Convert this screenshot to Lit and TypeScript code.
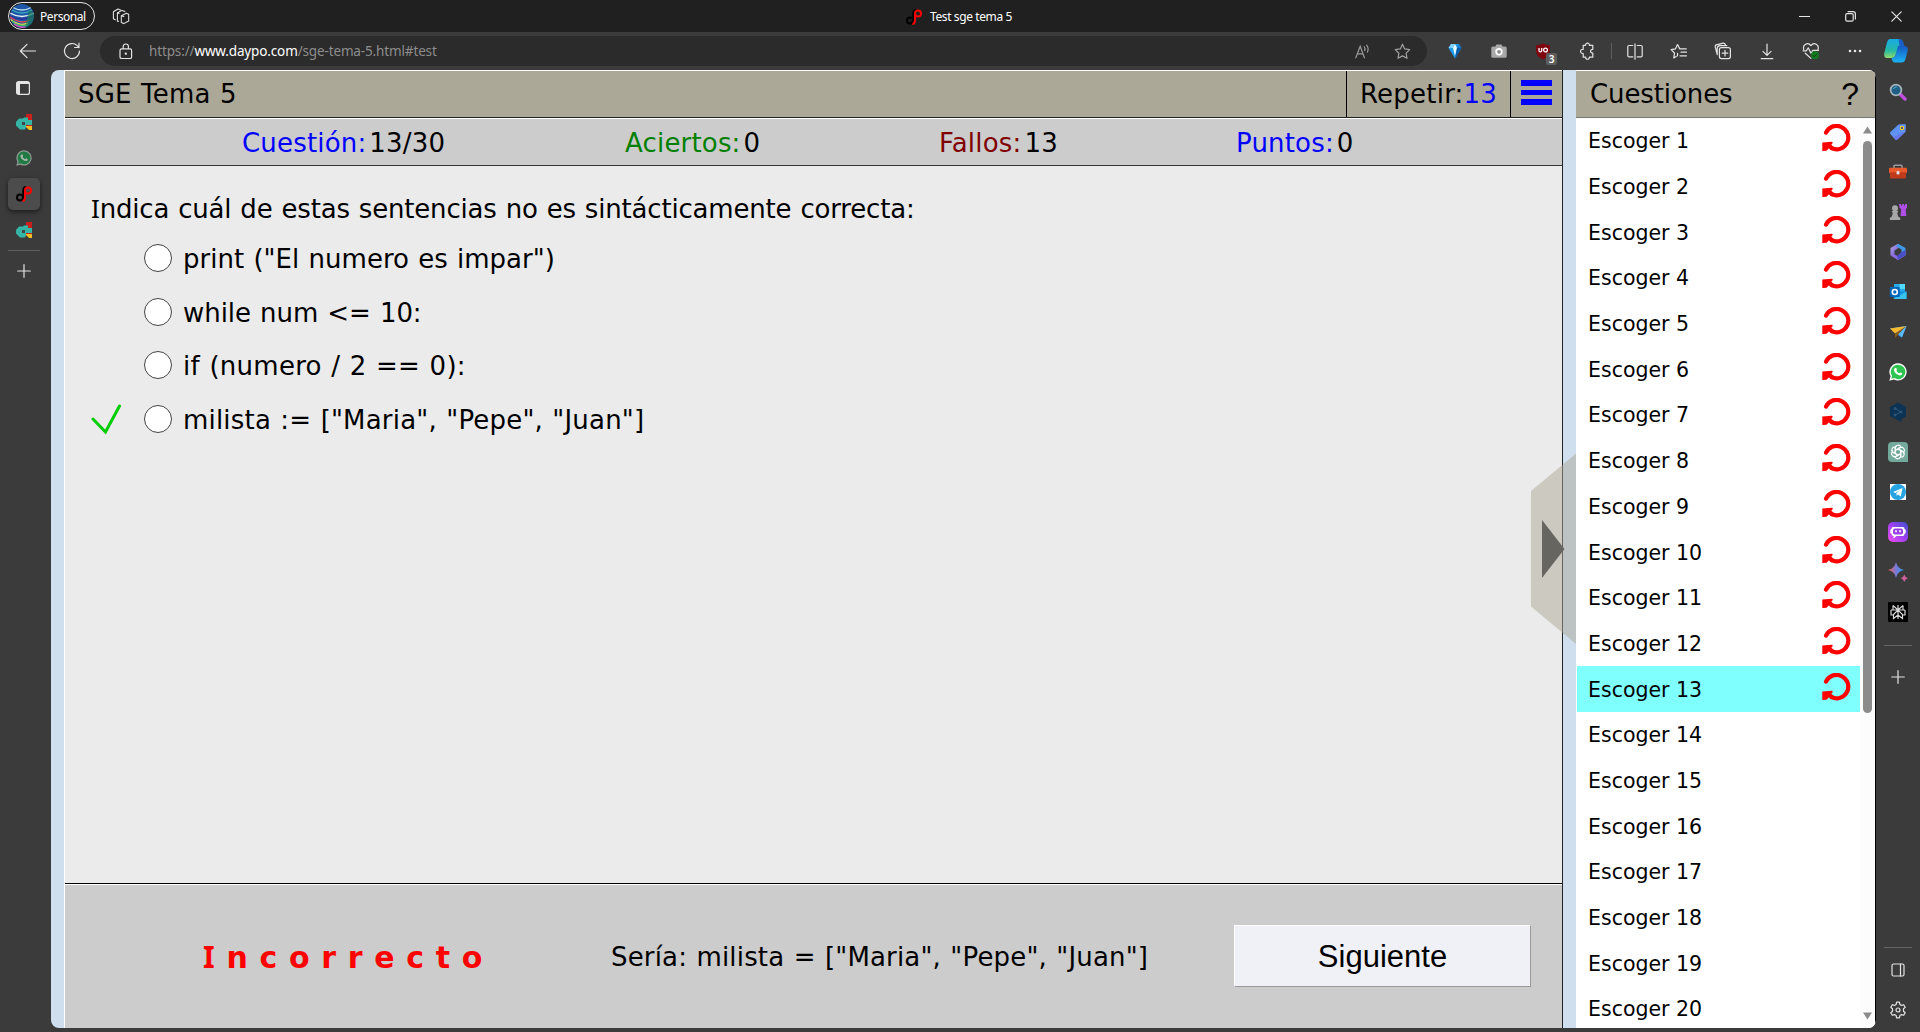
import { LitElement, html, css, svg, nothing } from "lit";
import { customElement } from "lit/decorators.js";

const line = (w: number, h: number, body: unknown, vb = `0 0 ${w} ${h}`) =>
  html`<svg width=${w} height=${h} viewBox=${vb} fill="none" stroke="#e4e4e4" stroke-width="1.2"
    stroke-linecap="round" stroke-linejoin="round">${body}</svg>`;
const art = (w: number, h: number, body: unknown) =>
  html`<svg width=${w} height=${h} viewBox=${`0 0 ${w} ${h}`}>${body}</svg>`;

const plus = line(14, 14, svg`<path d="M7 .7v12.6M.7 7h12.6"/>`);

const daypo = art(16, 16, svg`<g fill="none" stroke-width="2">
  <circle cx="4" cy="11.600" r="3" stroke="#000"/><path d="M7.300 12V4.500Q7.400 1 10 1" stroke="#000"/>
  <circle cx="12" cy="4.400" r="3" stroke="#f00"/><path d="M9 4.400V10.500Q9 15 6.400 15" stroke="#f00"/></g>`);

const campus = art(16, 16, svg`<path d="M10 0h6v6h-6z" fill="#c9201c"/>
  <path d="M3 4.500h4l1-1h4v3l-2 2v5l-1 2H4l-2-2-2-2V8z" fill="#35b5a8"/><path d="M10 6h6v5h-6z" fill="#35b5a8"/>
  <path d="M6 8h3v3H6z" fill="#444"/><path d="M10 11h6v5h-3l-3-3z" fill="#f4bd20"/><path d="M10 11h6v1h-6z" fill="#c9201c"/>`);

const whatsapp = (s: number, rim: string, green: string, phone: string) =>
  html`<svg width=${s} height=${s} viewBox="0 0 18 18">
    <path d="M9.200.3a8.600 8.600 0 1 1-4.200 16.200L.3 17.700l1.300-4.500A8.600 8.600 0 0 1 9.200.3z" fill=${rim}/>
    <path d="M9.200 1.700a7.200 7.200 0 1 1-3.900 13.300l-3 .8.8-2.900A7.200 7.200 0 0 1 9.200 1.700z" fill=${green}/>
    <path d="M6.400 5c.5-.3.900-.1 1.100.4l.5 1.200c.1.400-.6 1-.6 1.200.6 1.200 1.600 2 2.800 2.500.4 0 .8-1 1.200-.9l1.500.7c.5.300.2 1.300-.2 1.700-1.100 1.100-3 .6-4.600-.5C6.500 10.200 5 8.600 5 6.900c0-.8.600-1.600 1.400-1.900z" fill=${phone}/></svg>`;

const reload = html`<svg class="reload" width="29" height="29" viewBox="0 0 29 29">
  <path d="M4 8.600A11.700 11.700 0 1 1 9.600 24.200" fill="none" stroke="#f00" stroke-width="4.200" stroke-linecap="round"/>
  <path d="M.3 18.400L9.900 17.800Q11.300 18 10.400 19.400L9.300 20.700L12 23L10 26.400L7 24.300L4.500 26.800L.3 27z" fill="#f00"/></svg>`;

const workspaces = line(18, 18, svg`<path stroke-width="1.050" d="M9.300 8.700l5-2.400 2.400.9v6.800l-4.900 2.600-2.500-1V8.700l2.500.900M6.600 14.200h-1.200V5.800L10 3.400l2.900 1.100M3.300 12.700L1.400 11.800V4.800L6 2l2.500.9M5.400 5.800l1.800.6"/>`);

const uiLock = line(14, 17, svg`<rect x="1" y="5.800" width="11.600" height="9.700" rx="1.600"/><path d="M4.200 5.500V3.600a2.600 2.600 0 0 1 5.200 0v1.900"/><circle cx="6.800" cy="10.600" r=".6" fill="#e4e4e4"/>`);

const readAloud = html`<svg width="15" height="15" viewBox="0 0 15 15" fill="none" stroke="#9a9a9a" stroke-width="1.200" stroke-linecap="round"><path d="M.8 13.800L5.200 2.200l4.200 11.600M2.400 9.800h5.500M9.200 2.800q1.300 1.600.5 3.800M11.600 1.200q2.600 3.300.8 6.900"/></svg>`;
const star = html`<svg width="17" height="17" viewBox="0 0 17 17" fill="none" stroke="#a0a0a0" stroke-width="1.200" stroke-linejoin="round"><path d="M8.500 1.200l2.200 4.700 5 .7-3.600 3.600.9 5.100-4.500-2.400L4 15.300l.9-5.100L1.200 6.600l5.100-.7z"/></svg>`;

const gem = art(14, 16, svg`<path d="M3 1h8l2.500 4L7 15.500.500 5z" fill="#1e9df0"/><path d="M3 1h4L5 5H.5z" fill="#7fd1ff"/><path d="M7 1L5 5l2 8 2-8z" fill="#e9f9ff"/><path d="M11 1L9 5h4.500z" fill="#1577c4"/><path d="M9 5h4.500L7 15.500z" fill="#0a5aa6"/>`);
const camera = art(16, 14, svg`<path d="M2 2.500h2.500L5.500.600h5L11.500 2.500H14q1.700 0 1.700 1.500v8.500q0 1.200-1.500 1.200H1.800Q.3 13.700.3 12.500V4Q.3 2.500 2 2.500z" fill="#a9a9a9"/><circle cx="8" cy="7.800" r="3.700" fill="#fff"/><circle cx="8" cy="7.800" r="1.900" fill="#8b8b8b"/>`);
const shield = art(16, 17, svg`<path d="M8 .5q3 1.700 7 1.700v5.500Q15 13 8 16.500 1 13 1 7.700V2.200q4 0 7-1.700z" fill="#800610"/><path d="M4 5v2.500q0 1.300 1.300 1.300T6.700 7.500V5" fill="none" stroke="#fff" stroke-width="1.300"/><circle cx="10.500" cy="7" r="1.900" fill="none" stroke="#fff" stroke-width="1.300"/>`);
const puzzle = line(16, 18, svg`<path d="M4.200 3.300h2.400c-.2-3 4-3 3.800 0h3.400v4c-3-.2-3 3.900 0 3.700v4.200h-3.400c.2 2.700-4 2.700-3.800 0H4.200v-3.700c-3.600.2-3.600-4.400 0-4.200z"/>`);
const split = line(16, 17, svg`<path d="M5.800 2.500H2q-1.200 0-1.200 1.200v9q0 1.200 1.200 1.200h3.800M10.200 2.500H14q1.200 0 1.200 1.200v9q0 1.200-1.200 1.200h-3.800M8 .8v15.400"/>`);
const favs = line(18, 17, svg`<path d="M6.200 13.500l-2.400 1.400.7-4.900L1.100 6.600l4.300-.7L7.500 1.500l2.300 4.400h6.400M11 9.200h5.500M10 12.800h6.500M7.600 10.400l-.2 2.400"/>`);
const collect = line(18, 18, svg`<rect x="5.400" y="5.600" width="11" height="11" rx="2"/><path d="M11 8.300v5.600M8.200 11.100h5.600M3 11.800L1.200 4.600Q1 3.300 2.200 2.900l7-1.800q1.400-.2 1.900 1.100l.3.900M3.200 12.600V6.600Q3.200 3.900 6 3.600h6.800"/>`);
const download = line(14, 17, svg`<path d="M7 1v11M3 8.300l4 4 4-4M1.200 15.700h11.600"/>`);
const health = line(18, 18, svg`<path d="M1.800 7.500C.2 2.500 6-.3 8.900 3.600c2.900-3.900 8.700-1.100 7.100 3.900M1 8.800h3.400l1.800-3 2.800 5.500 1.800-3h5.700M3.300 11.200l5.600 5.200"/><circle cx="13" cy="13.300" r="4" fill="#137a20" stroke="none"/><path d="M11.300 13.400l1.200 1.200 2.300-2.500" stroke="#0a3d10" stroke-width="1"/>`);
const dots = art(16, 4, svg`<g fill="#e8e8e8"><circle cx="3" cy="2" r="1.300"/><circle cx="8" cy="2" r="1.300"/><circle cx="13" cy="2" r="1.300"/></g>`);
const copilot = art(26, 24, svg`<defs>
  <linearGradient id="ca" x1="0" y1="0" x2="0" y2="1"><stop stop-color="#19a9e6"/><stop offset=".6" stop-color="#25b9a5"/><stop offset="1" stop-color="#8fdc6a"/></linearGradient>
  <linearGradient id="cb" x1="0" y1="0" x2="0" y2="1"><stop stop-color="#1658c4"/><stop offset="1" stop-color="#1bb4f2"/></linearGradient></defs>
  <path d="M7 0h9q3 0 4 4l1 3h-5L12.500 16q-1 3-4 3H4q-3.500 0-2.700-5L4 3.500Q4.900 0 7 0z" fill="url(#ca)"/>
  <path d="M15 7h6.500q4 0 3.200 4.500L22.500 20q-.9 3.500-4 3.500H12q-2.500 0-3.500-4.500 3 0 4-3z" fill="url(#cb)"/>
  <path d="M15.500 0q4 0 5 4l1 3h-5z" fill="#1b5fc8"/>`);

const search = art(18, 18, svg`<path d="M11 11l5 5" stroke="#c04fe0" stroke-width="3.400" stroke-linecap="round"/><circle cx="7" cy="7" r="5.400" fill="#1f5f86" stroke="#a8b4ba" stroke-width="1.700"/><path d="M4.400 6q1-2.300 3.400-2" stroke="#5fb2d8" fill="none"/>`);
const tag = art(18, 18, svg`<path d="M9.500 1.500L15.500 1q1.600 0 1.500 1.500l-.5 6.200L8.300 16.500q-1 .9-2 0L1.300 11q-.8-1 .1-2z" fill="#5f92f2"/><path d="M16.500 8.700L8.300 16.500q-1 .9-2 0L4 14z" fill="#6a78ee"/><circle cx="13" cy="5" r="1.700" fill="#2b4a8c" stroke="#f3c927" stroke-width="1.200"/>`);
const toolbox = art(18, 16, svg`<path d="M5 4V2q0-.8.8-.8h6.400q.8 0 .8.800v2" fill="none" stroke="#9a9a9a" stroke-width="1.500"/><rect y="3.700" width="18" height="5.500" rx="1.200" fill="#ea5a2d"/><rect x="1" y="8.200" width="16" height="6.300" rx="1" fill="#bf3b1b"/><rect x="7.500" y="7" width="3" height="3.600" rx="1" fill="#ddd"/>`);
const chess = art(18, 18, svg`<g fill="#a7a7a7"><circle cx="6" cy="5.300" r="3"/><path d="M3 8h6v1.500H8l1.200 4 2 1.500v2H.800v-2l2-1.500 1.200-4H3z"/></g><path d="M10 1h2v1.500h1.200V1h1.800v1.500h1V1H18v4l-1.300 1 .6 7h-5.700l.6-7L10.600 5z" fill="#b04fe8"/>`);
const m365 = art(18, 18, svg`<defs><linearGradient id="ma" x1="0" y1="0" x2="1" y2="1"><stop stop-color="#b9a9f0"/><stop offset="1" stop-color="#5b3fc0"/></linearGradient></defs>
  <path d="M9 .8L1.500 5v7.200l4 2.300V7.400L12 3.500z" fill="url(#ma)"/><path d="M9 .8l7.500 4.200v7L12.500 9V6.500L7.200 3.300z" fill="#3f9bea"/><path d="M16.500 8.500v4L9 17.200l-7.500-5 4-1 3.300 2 3.700-2.200z" fill="#8a6ae0"/><path d="M12.500 9l4-2v5.300L9 17l-1-4z" fill="#4b4fc4"/>`);
const outlook = art(18, 18, svg`<path d="M5 1h11v8H5z" fill="#28a8ea"/><path d="M10.500 1H16v5h-5.500z" fill="#50d9ff"/><path d="M4 8l13.500.5V16H5z" fill="#1490df"/><path d="M4 16l13.500-7.500V16z" fill="#37c2f1"/><rect x=".8" y="4" width="10" height="10" rx="1" fill="#0364b8"/><circle cx="5.800" cy="9" r="2.500" fill="none" stroke="#fff" stroke-width="1.600"/>`);
const plane = art(18, 16, svg`<path d="M1 4.500L17.500 2 12.500 13.500z" fill="#2f9df2"/><path d="M1 4.500L17.500 2 6 9.500z" fill="#f5b82e"/><path d="M6 9.500L17.500 2l-8 8.500L6 14z" fill="#8a5a18"/><path d="M17.500 2l-8 8.300 3.500 3.200z" fill="#58b9ff"/>`);
const deepl = art(18, 20, svg`<path d="M9 .5l8 4.500v9.500L12.500 17v2.700L8.500 18 1 14V5z" fill="#0c3353"/><g stroke="#2f5878" fill="#2f5878"><path d="M6 6.500L12 10l-6 3" fill="none"/><circle cx="6" cy="6.500" r="1"/><circle cx="12" cy="10" r="1"/><circle cx="6" cy="13" r="1"/></g>`);
const gpt = art(20, 20, svg`<path d="M4 0h12q4 0 4 4v16H4q-4 0-4-4V4q0-4 4-4z" fill="#74aa9c"/><g fill="none" stroke="#fff" stroke-width="1.100">${[0, 60, 120, 180, 240, 300].map(
  (a) => svg`<path transform=${`rotate(${a} 10 10)`} d="M7.300 11.500V6a3 3 0 0 1 5.600-1.300M7.300 8.300l4.600-2.700a3 3 0 0 1 3 .2"/>`)}</g>`);
const telegram = art(16, 16, svg`<path d="M0 0h16v16H0z" fill="#fff"/><circle cx="8" cy="8" r="8" fill="#27a3e2"/><path d="M3 8l9.500-4-1.700 8.500-2.700-2-1.400 1.300-.3-2.500 3.300-3-4.200 2.600z" fill="#fff"/>`);
const poe = art(20, 20, svg`<defs><linearGradient id="pg" x1="0" y1="1" x2="1" y2="0"><stop stop-color="#f04df0"/><stop offset=".5" stop-color="#a040f0"/><stop offset="1" stop-color="#3b4fd0"/></linearGradient></defs><rect width="20" height="20" rx="5" fill="url(#pg)"/><path d="M5 5h10q1.500 0 1.500 2 1.200 0 1.200 1.500v2q0 1.200-1.200 1.200Q16.500 14 15 14H8.500L5.500 16.500V14Q3.500 14 3.500 11.700 2.300 11.700 2.300 10.500v-2Q2.300 7 3.500 7 3.500 5 5 5z" fill="#fff"/><rect x="5" y="6.500" width="10" height="6" rx="2" fill="#9a3fe8"/><path d="M8 8.300v2M12 8.300v2" stroke="#fff" stroke-width="1.600"/>`);
const sparkle = art(20, 20, svg`<defs><linearGradient id="sg" x1="0" x2="1"><stop stop-color="#f0654f"/><stop offset=".5" stop-color="#7a78d8"/><stop offset="1" stop-color="#2a9ae8"/></linearGradient></defs><path d="M8 0q1.300 6.500 8 8-6.700 1.500-8 8-1.300-6.500-8-8 6.700-1.500 8-8z" fill="url(#sg)"/><path d="M16.300 12.500q.8 3 3.700 3.800-2.900.8-3.700 3.700-.8-2.900-3.700-3.700 2.900-.8 3.700-3.800z" fill="#d0609a"/>`);
const perplexity = art(20, 20, svg`<rect width="20" height="20" rx="1" fill="#000"/><g fill="none" stroke="#d8d8d8" stroke-width="1.200"><path d="M10 3v14M5 3.500l5 4.500 5-4.500M5 3.500V8h10V3.500M3 8h4M13 8h4M3 8v5h2.500M17 8v5h-2.500M10 8l-4.500 4.500v4L10 13l4.500 3.500v-4z"/></g>`);
const sidePanel = line(14, 14, svg`<rect x="1" y="1" width="12" height="12" rx="1.500"/><path d="M9.500 1v12"/>`);
const gear = line(18, 18, svg`<circle cx="9" cy="9" r="2"/><path d="M7.600 1.200h2.800l.5 2.300 1.600.9 2.200-.7 1.500 2.500-1.700 1.600v2.400l1.700 1.600-1.500 2.500-2.200-.7-1.600.9-.5 2.300H7.600l-.5-2.300-1.600-.9-2.200.7-1.500-2.500 1.700-1.600V7.800L1.800 6.200l1.500-2.500 2.200.7 1.600-.9z"/>`);
const tabsPane = html`<svg width="14" height="14" viewBox="0 0 14 14"><rect x=".6" y=".6" width="12.800" height="12.800" rx="2" fill="none" stroke="#e4e4e4" stroke-width="1.200"/><path d="M1 1h12v2H4v10H1z" fill="#e4e4e4"/></svg>`;

const avatar = art(24, 24, svg`<defs><clipPath id="av"><circle cx="12" cy="12" r="12"/></clipPath></defs><g clip-path="url(#av)"><rect width="24" height="24" fill="#1e56a8"/>
  <g fill="none" stroke-width="1.400"><path d="M2 3q10 6 20 0" stroke="#b8d8e8"/><path d="M2 6q10 6 20 0" stroke="#38a8b8"/><path d="M0 9q12 7 24 0" stroke="#e8f0f0"/><path d="M0 12q11 6 24 0" stroke="#2a2f9c"/><path d="M0 13q11 8 20 3" stroke="#e04a50"/><path d="M0 15q9 8 18 4" stroke="#e8d84a"/><path d="M2 17q6 6 16 4" stroke="#42b86a"/><path d="M4 20q5 4 12 3" stroke="#d850c0"/></g><path d="M19 6l6 4-3 10-7 4z" fill="#187a58" opacity=".7"/></g>`);

@customElement("app-root")
export class AppRoot extends LitElement {
  static styles = css`
    :host { display: block; width: 1920px; height: 1032px; overflow: hidden; background: #3b3b3b;
      font-family: "Noto Sans", "Open Sans", sans-serif; color: #fff; }
    * { box-sizing: border-box; }
    svg { display: block; flex: none; }
    .window { display: grid; grid-template-columns: 1920px; grid-template-rows: 32px 38px 962px; height: 1032px; }
    .titlebar { background: #202020; display: grid; grid-template-columns: 1fr auto 1fr; align-items: center; }
    .tl { display: flex; align-items: center; gap: 17px; padding-left: 8px; }
    .profile { display: flex; align-items: center; width: 87px; height: 28px; border: 1px solid #e6e6e6; border-radius: 14px; padding-left: 1px; gap: 6px; font-size: 12px; letter-spacing: -.45px; }
    .title { display: flex; align-items: center; gap: 8px; font-size: 12px; letter-spacing: -.4px; white-space: nowrap; padding: 1px 2px 0 0; }
    .winctl { display: flex; justify-content: flex-end; padding-right: 1px; }
    .winctl span { width: 46px; display: flex; justify-content: center; }
    .toolbar { display: flex; align-items: center; }
    .toolbar > * { flex: none; }
    .nav { width: 100px; display: flex; align-items: center; gap: 26px; padding-left: 19px; }
    .omni { width: 1327px; height: 30px; border-radius: 15px; background: #2b2b2b; display: flex; align-items: center; padding: 0 5px 0 19px; font-size: 13.500px; color: #8d8d8d; }
    .url { flex: 1; margin-left: 16px; letter-spacing: -.14px; }
    .url b { font-weight: 400; color: #fff; }
    .omni .slot { width: 40px; display: flex; justify-content: center; }
    .ext { display: flex; align-items: center; padding-left: 6px; width: 493px; }
    .ext .slot { width: 44px; height: 30px; flex: none; display: flex; align-items: center; justify-content: center; position: relative; }
    .ext .slot:last-child { width: 38px; }
    .ext .vsep { width: 1px; height: 16px; background: #5e5e5e; margin: 0 1px 0 2px; }
    .badge { position: absolute; left: 25px; top: 17px; width: 11px; height: 12px; background: #5d5d5d; border-radius: 2px; font-size: 10px; line-height: 12px; font-weight: 600; text-align: center; }
    .body { display: grid; grid-template-columns: 51px 1825px 44px; }
    .left { display: flex; flex-direction: column; align-items: center; padding-right: 3px; }
    .left .slot { width: 32px; height: 32px; margin-bottom: 4px; display: flex; align-items: center; justify-content: center; border-radius: 5px; }
    .left .slot:first-child { margin: 2px 2px 2px 0; }
    .left .on { background: #4c4c4c; box-shadow: 0 2px 5px #0008; }
    .left .hsep { width: 32px; height: 1px; background: #5e5e5e; margin: 0 0 4px; }
    .left .hsep + .slot { margin-right: 1px; }
    .right { display: flex; flex-direction: column; align-items: center; padding-top: 2px; padding-right: 1px; }
    .right .slot { height: 40px; width: 40px; display: flex; align-items: center; justify-content: center; }
    .right .hsep { width: 28px; height: 1px; background: #666; margin: 13px 0 11px; }
    .right .bottom { margin-top: auto; padding-bottom: 2px; }
    .right .bottom .hsep { margin: 0 6px 2px; }
    .page { height: 958px; background: #cfdfee; border-radius: 8px; overflow: hidden; display: grid; grid-template-columns: 13px 1499px 13px 300px; position: relative;
      font-family: "DejaVu Sans", Verdana, sans-serif; color: #000; font-size: 26px; white-space: nowrap; word-spacing: .9px; }
    .quiz { grid-column: 2; display: grid; grid-template-rows: 48px 48px 718px 144px; border-left: 1px solid #fff; border-right: 1px solid #222; }
    .head { background: #aba897; border-top: 1px solid #fff; border-bottom: 1px solid #222; display: flex; align-items: stretch; line-height: 46px; padding-left: 13px; }
    .head .name { flex: 1; letter-spacing: .2px; }
    .head .rep { width: 164px; border-left: 1px solid #000; padding-left: 13px; letter-spacing: .22px; }
    .head .menu { width: 52px; border-left: 1px solid #000; padding: 9px 0 0 10px; display: flex; flex-direction: column; gap: 4px; }
    .menu i { display: block; width: 31px; height: 5.500px; background: #00f; }
    .blue { color: #00f; } .green { color: #008000; } .maroon { color: #800000; }
    .stats { background: #ccc; border-top: 1px solid #fff; border-bottom: 1px solid #333; display: grid; grid-template-columns: 383px 314px 297px 1fr; padding-left: 177px; line-height: 48px; height: 48px; letter-spacing: .18px; }
    .stats b { font-weight: 400; margin-left: 3px; }
    .question { background: #ebebeb; padding: 24px 0 0 26px; border-bottom: 1px solid #000; }
    .ask { line-height: 36px; height: 42px; letter-spacing: -.18px; }
    .cap { font-family: "Noto Sans", sans-serif; }
    .opt { display: flex; align-items: center; height: 53.700px; }
    .mark { width: 53px; }
    .radio { width: 28px; height: 28px; border-radius: 50%; border: 1.500px solid #444; background: #fff; margin-top: -2px; }
    .opt .t { margin-left: 11px; }
    .t0 { letter-spacing: .03px; } .t1 { letter-spacing: -.05px; } .t2 { letter-spacing: .28px; } .t3 { letter-spacing: .19px; }
    .foot { background: #ccc; border-top: 1px solid #fff; display: flex; align-items: center; padding-left: 138px; }
    .wrong { color: #f00; font-weight: 700; font-size: 30px; letter-spacing: 11.700px; width: 408px; margin-top: -1px; }
    .would { width: 623px; letter-spacing: .17px; margin-top: 1px; }
    .next { width: 297px; height: 62px; margin-top: -2px; border: 1px solid; border-color: #fff #999 #999 #fff; background: #f0f1f6; font: 31px/60px "Liberation Sans", Arial, sans-serif; color: #000; padding: 1px 0 0; }
    .list { grid-column: 4; display: grid; grid-template-rows: 48px 910px; border-right: 1px solid #000; background: #fff; }
    .lhead { background: #aba897; border-top: 1px solid #fff; border-bottom: 1px solid #777; display: flex; justify-content: space-between; line-height: 46px; padding: 0 16px 0 14px; letter-spacing: -.1px; }
    .lhead b { font: 400 32px/46px "Liberation Sans", Arial, sans-serif; }
    .scroller { display: grid; grid-template-columns: 1fr 15px; overflow: hidden; }
    .rows { padding-left: 1px; }
    .row { height: 45.700px; display: flex; align-items: center; justify-content: space-between; padding: 1px 9px 0 11px; font-size: 20.500px; word-spacing: 0; }
    .sel { background: #80ffff; }
    .reload { margin-top: -5px; }
    .bar { background: #fcfcfc; display: flex; flex-direction: column; align-items: center; padding: 8px 1px 12px 0; }
    .thumb { width: 9px; height: 572px; border-radius: 5px; background: #8b8b8b; margin: 7px 0 auto; }
    .handle { position: absolute; left: 1480px; top: 383px; }
  `;

  private stat(cls: string, label: string, value: string) {
    return html`<div><span class=${cls}>${label}</span><b>${value}</b></div>`;
  }

  render() {
    const left = [tabsPane, campus, whatsapp(16, "#8f9a92", "#1f7a44", "#a9b8ae"), daypo, campus];
    const right = [search, tag, toolbox, chess, m365, outlook, plane, whatsapp(18, "#fff", "#2fc350", "#fff"), deepl, gpt, telegram, poe, sparkle, perplexity];
    const answers = ['print ("El numero es impar")', "while num <= 10:", "if (numero / 2 == 0):", 'milista := ["Maria", "Pepe", "Juan"]'];
    return html`<div class="window">
      <header class="titlebar">
        <div class="tl"><div class="profile">${avatar}<span>Personal</span></div>${workspaces}</div>
        <div class="title">${daypo}<span>Test sge tema 5</span></div>
        <div class="winctl">
          <span>${line(11, 11, svg`<path d="M.5 5.500h10"/>`)}</span>
          <span>${line(11, 11, svg`<rect x=".7" y="2.700" width="7.500" height="7.500" rx="1.500"/><path d="M3 .6h5Q10.400.600 10.400 3v5"/>`)}</span>
          <span>${line(11, 11, svg`<path d="M.8.800l9.400 9.400M10.200.800L.8 10.200"/>`)}</span>
        </div>
      </header>
      <div class="toolbar">
        <div class="nav">
          ${line(18, 16, svg`<path d="M16.500 8H1.500M8 1.300L1.300 8 8 14.700"/>`)}
          ${line(18, 18, svg`<path d="M16.500 9A7.500 7.500 0 1 1 14.300 3.700L16 5.500M16 1.200v4.300h-4.400"/>`)}
        </div>
        <div class="omni">${uiLock}<span class="url">https://<b>www.daypo.com</b>/sge-tema-5.html#test</span>
          <span class="slot">${readAloud}</span><span class="slot">${star}</span></div>
        <div class="ext">
          <span class="slot">${gem}</span><span class="slot">${camera}</span>
          <span class="slot">${shield}<span class="badge">3</span></span><span class="slot">${puzzle}</span>
          <span class="vsep"></span>
          ${[split, favs, collect, download, health, dots, copilot].map((i) => html`<span class="slot">${i}</span>`)}
        </div>
      </div>
      <div class="body">
        <nav class="left">
          ${left.map((i, n) => html`<span class="slot ${n === 3 ? "on" : ""}">${i}</span>`)}
          <span class="hsep"></span><span class="slot">${plus}</span>
        </nav>
        <main class="page">
          <section class="quiz">
            <div class="head"><span class="name">SGE Tema 5</span><span class="rep">Repetir:<span class="blue">13</span></span><span class="menu"><i></i><i></i><i></i></span></div>
            <div class="stats">
              ${this.stat("blue", "Cuestión:", "13/30")}${this.stat("green", "Aciertos:", "0")}
              ${this.stat("maroon", "Fallos:", "13")}${this.stat("blue", "Puntos:", "0")}
            </div>
            <div class="question">
              <div class="ask"><span class="cap">I</span>ndica cuál de estas sentencias no es sintácticamente correcta:</div>
              ${answers.map((a, n) => html`<div class="opt"><span class="mark">${n === 3
                ? html`<svg width="30" height="31" viewBox="0 0 30 31"><path d="M2 15L14.500 28 28.500 2" fill="none" stroke="#0c0" stroke-width="3" stroke-linecap="round"/></svg>` : nothing}</span>
                <span class="radio"></span><span class="t t${n}">${a}</span></div>`)}
            </div>
            <div class="foot"><span class="wrong"><span class="cap">I</span>ncorrecto</span>
              <span class="would">Sería: milista = ["Maria", "Pepe", "Juan"]</span>
              <button class="next">Siguiente</button></div>
          </section>
          <aside class="list">
            <div class="lhead"><span>Cuestiones</span><b>?</b></div>
            <div class="scroller">
              <div class="rows">${Array.from({ length: 20 }, (_, n) => html`<div class="row ${n === 12 ? "sel" : ""}"><span>Escoger ${n + 1}</span>${n < 13 ? reload : nothing}</div>`)}</div>
              <div class="bar">${art(9, 8, svg`<path d="M4.500.500L9 7.500H0z" fill="#8b8b8b"/>`)}<span class="thumb"></span>${art(9, 8, svg`<path d="M4.500 7.500L9 .5H0z" fill="#8b8b8b"/>`)}</div>
            </div>
          </aside>
          <svg class="handle" width="46" height="192" viewBox="0 0 46 192"><path d="M0 38L45 .5V191L0 153.500z" fill="#aba795" opacity=".5"/><path d="M11 67L33.500 96 11 125z" fill="#666560"/></svg>
        </main>
        <nav class="right">
          ${right.map((i) => html`<span class="slot">${i}</span>`)}
          <span class="hsep"></span><span class="slot">${plus}</span>
          <div class="bottom"><div class="hsep"></div><span class="slot">${sidePanel}</span><span class="slot">${gear}</span></div>
        </nav>
      </div>
    </div>`;
  }
}
